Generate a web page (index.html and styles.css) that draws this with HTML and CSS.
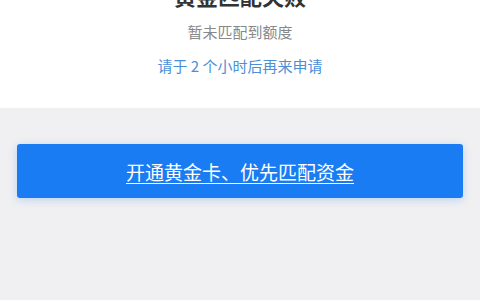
FILE: index.html
```html
<!DOCTYPE html>
<html lang="zh-CN">
<head>
    <meta charset="UTF-8">
    <meta name="viewport" content="width=device-width, initial-scale=1.0">
    <title>匹配结果</title>
    <link rel="stylesheet" href="styles.css">
</head>
<body>
    <div class="result">
        <h1 class="result-title">黄金匹配失败</h1>
        <p class="result-desc">暂未匹配到额度</p>
        <p class="result-tip">请于 2 个小时后再来申请</p>
    </div>
    <div class="actions">
        <button class="button">开通黄金卡、优先匹配资金</button>
    </div>
</body>
</html>
```

FILE: styles.css
```css
body {
    margin: 0;
    background-color: #f0f0f2;
    font-family: "Noto Sans CJK SC", "Noto Sans", sans-serif;
    height: 300px;
    overflow: hidden;
}
.result {
    background-color: white;
    display: flex;
    flex-direction: column;
    align-items: center;
    gap: 18px;
    padding-bottom: 34px;
}
.result-title {
    margin: -16px 0 0;
    font-size: 22px;
    line-height: 22px;
    font-weight: bold;
    color: #333;
}
.result-desc,
.result-tip {
    margin: 0;
    font-size: 15px;
    line-height: 16px;
}
.result-desc {
    color: #888;
}
.result-tip {
    color: #4a8fd8;
}
.actions {
    padding: 36px 17px 0;
}
.button {
    width: 100%;
    height: 54px;
    border: none;
    border-radius: 3px;
    background-color: #1a7cf3;
    color: white;
    font-family: inherit;
    font-size: 19px;
    text-decoration: underline;
    text-underline-offset: 3px;
    box-shadow: 0 2px 8px rgba(26, 124, 243, 0.25);
    cursor: pointer;
}
```
